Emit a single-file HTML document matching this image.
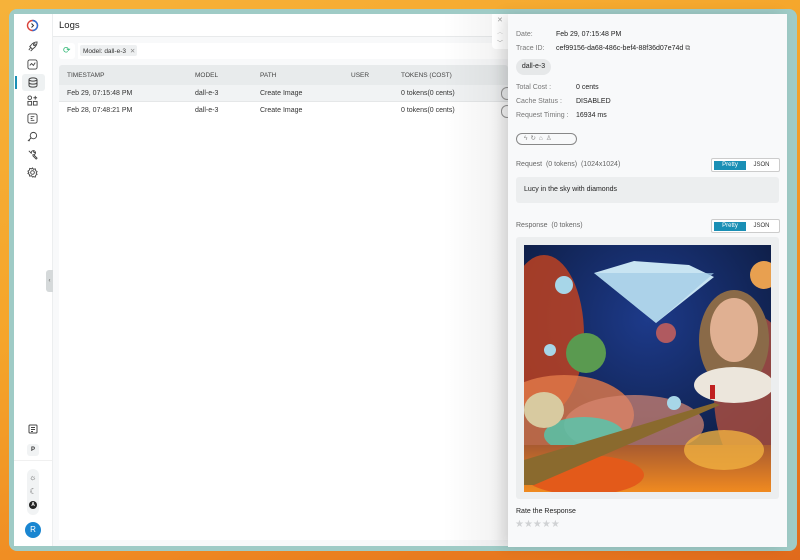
<!DOCTYPE html>
<html><head><meta charset="utf-8"><style>
*{box-sizing:border-box;margin:0;padding:0}
body{width:800px;height:560px;overflow:hidden;font-family:"Liberation Sans",sans-serif;background:linear-gradient(160deg,#f6b23a 0%,#f5a52a 40%,#ef8a22 70%,#e06a1c 100%);position:relative}
.win{position:absolute;left:9px;top:9px;width:788px;height:542px;background:#9fcbc6;border-radius:8px}
.side{position:absolute;left:14px;top:14px;width:39px;height:532px;background:#fff;border-right:1px solid #eceeef}
.main{position:absolute;left:53px;top:14px;width:455px;height:532px;background:#f8f9fa}
.t{position:absolute;font-size:7px;color:#333;white-space:nowrap}
.drawer{position:absolute;left:508px;top:14px;width:279px;height:533px;background:#f8f9fa;box-shadow:-6px 0 12px rgba(0,0,0,.12)}
.lab{position:absolute;font-size:7px;color:#777;white-space:nowrap}
.val{position:absolute;font-size:7px;color:#222;white-space:nowrap}
.seg{position:absolute;width:69px;height:14px;border:1px solid #ccc;border-radius:2px;background:#fff;display:flex;align-items:center;padding:0 2px}
.seg b{display:flex;align-items:center;justify-content:center;width:32px;height:9px;background:#1a8fb5;color:#fff;font-size:6px;font-weight:normal}
.seg i{display:flex;align-items:center;justify-content:center;width:31px;height:9px;font-style:normal;font-size:6px;color:#333}
</style></head><body>
<div class="win"></div>
<div class="side">
 <svg style="position:absolute;left:12px;top:5px" width="13" height="13" viewBox="0 0 13 13"><circle cx="6.5" cy="6.5" r="5" fill="none" stroke="#d9423a" stroke-width="1.4"/><path d="M6.5 1.5A5 5 0 0 1 6.5 11.5" fill="none" stroke="#2a6fd6" stroke-width="1.4"/><path d="M5.5 4.5l2 2-2 2" fill="none" stroke="#333" stroke-width="1"/></svg>
 <svg style="position:absolute;left:13px;top:27px" width="11" height="11" viewBox="0 0 12 12" fill="none" stroke="#444" stroke-width="1"><path d="M2 10l2-3M4 11l2-2M7 8c3-2 4-5 4-7-2 0-5 1-7 4L3 6l3 3z"/><circle cx="8" cy="4" r="1"/></svg>
 <svg style="position:absolute;left:13px;top:45px" width="11" height="11" viewBox="0 0 12 12" fill="none" stroke="#444" stroke-width="1"><rect x="1" y="1" width="10" height="10" rx="2"/><path d="M3 7l2-2 2 2 2-3"/></svg>
 <div style="position:absolute;left:1px;top:62px;width:2px;height:13px;background:#1a8fb5"></div>
 <div style="position:absolute;left:8px;top:60px;width:23px;height:17px;background:#eef1f2;border-radius:3px"></div>
 <svg style="position:absolute;left:14px;top:63px" width="10" height="11" viewBox="0 0 10 11" fill="none" stroke="#444" stroke-width="1"><ellipse cx="5" cy="2.5" rx="4" ry="1.6"/><path d="M1 2.5v6c0 1 2 1.6 4 1.6s4-.6 4-1.6v-6M1 5.5c0 1 2 1.6 4 1.6s4-.6 4-1.6"/></svg>
 <svg style="position:absolute;left:13px;top:81px" width="11" height="11" viewBox="0 0 12 12" fill="none" stroke="#444" stroke-width="1"><circle cx="3" cy="3" r="2"/><rect x="1" y="7" width="4" height="4"/><rect x="7" y="7" width="4" height="4"/><path d="M9 1v4M7 3h4"/></svg>
 <svg style="position:absolute;left:13px;top:99px" width="11" height="11" viewBox="0 0 12 12" fill="none" stroke="#444" stroke-width="1"><rect x="1" y="1" width="10" height="10" rx="2"/><path d="M4 4h4M4 6h2M4 8h4"/></svg>
 <svg style="position:absolute;left:13px;top:117px" width="11" height="11" viewBox="0 0 12 12" fill="none" stroke="#444" stroke-width="1"><circle cx="7" cy="5" r="3.5"/><path d="M4.5 7.5L1 11M2 10l1 1"/></svg>
 <svg style="position:absolute;left:13px;top:135px" width="11" height="11" viewBox="0 0 12 12" fill="none" stroke="#444" stroke-width="1"><path d="M2 2l3 3M7 6l4 4-1 1-4-4M5 5c-1-2 1-4 3-3L7 3l1 1 1-1c1 2-1 4-3 3"/></svg>
 <svg style="position:absolute;left:13px;top:153px" width="11" height="11" viewBox="0 0 12 12" fill="none" stroke="#444" stroke-width="1"><circle cx="6" cy="6" r="2"/><path d="M6 1l1 1.5 2-.5.5 2L11 5l-1 1.5 1 1.5-1.5 1-.5 2-2-.5L6 11l-1-1.5-2 .5-.5-2L1 7l1-1-1-1.5 1.5-1 .5-2 2 .5z"/></svg>
 <svg style="position:absolute;left:14px;top:410px" width="10" height="10" viewBox="0 0 10 10" fill="none" stroke="#444" stroke-width="1"><rect x="1" y="1" width="8" height="8" rx="1"/><path d="M3 3.5h4M3 5.5h4M3 7.5h2"/></svg>
 <div style="position:absolute;left:13px;top:430px;width:12px;height:12px;background:#f1f3f4;border-radius:3px;font-size:6px;font-weight:bold;text-align:center;line-height:12px;color:#333">P</div>
 <div style="position:absolute;left:0;top:446px;width:38px;height:1px;background:#f0f0f0"></div>
 <div style="position:absolute;left:13px;top:455px;width:12px;height:46px;background:#f1f3f4;border-radius:6px"></div>
 <div style="position:absolute;left:15px;top:459px;font-size:8px;color:#555">☼</div>
 <div style="position:absolute;left:15.5px;top:473px;font-size:8px;color:#555">☾</div>
 <div style="position:absolute;left:15px;top:487px;width:8px;height:8px;border-radius:50%;background:#222;color:#fff;font-size:5px;text-align:center;line-height:8px;font-weight:bold">A</div>
 <div style="position:absolute;left:11px;top:508px;width:16px;height:16px;border-radius:50%;background:#1a86d1;color:#fff;font-size:8px;text-align:center;line-height:16px">R</div>
</div>
<div class="main">
 <div style="position:absolute;left:0;top:0;width:455px;height:23px;background:#fff;border-bottom:1px solid #e8eaeb"></div>
 <div class="t" style="left:6px;top:6px;font-size:9.5px;color:#222">Logs</div>
 <div style="position:absolute;left:6px;top:29px;width:16px;height:16px;background:#fff;border-radius:3px"></div>
 <div class="t" style="left:10px;top:31px;color:#2bb673;font-size:9px">⟳</div>
 <div style="position:absolute;left:25px;top:29px;width:430px;height:16px;background:#fff"></div>
 <div style="position:absolute;left:27px;top:31px;width:57px;height:11px;background:#eef0f1;border-radius:2px"></div>
 <div class="t" style="left:30px;top:32.5px;font-size:6.5px">Model: dall-e-3 <span style="color:#888;margin-left:2px">✕</span></div>
 <div style="position:absolute;left:6px;top:51px;width:449px;height:20px;background:#e8ebec;border-radius:3px 3px 0 0"></div>
 <div class="t" style="left:14px;top:58px;font-size:6.5px;color:#444">TIMESTAMP</div>
 <div class="t" style="left:142px;top:58px;font-size:6.5px;color:#444">MODEL</div>
 <div class="t" style="left:207px;top:58px;font-size:6.5px;color:#444">PATH</div>
 <div class="t" style="left:298px;top:58px;font-size:6.5px;color:#444">USER</div>
 <div class="t" style="left:348px;top:58px;font-size:6.5px;color:#444">TOKENS (COST)</div>
 <div style="position:absolute;left:6px;top:71px;width:449px;height:17px;background:#f1f3f4;border-bottom:1px solid #e5e7e8"></div>
 <div style="position:absolute;left:6px;top:88px;width:449px;height:438px;background:#fff"></div>
 <div class="t" style="left:14px;top:76px">Feb 29, 07:15:48 PM</div>
 <div class="t" style="left:142px;top:76px">dall-e-3</div>
 <div class="t" style="left:207px;top:76px">Create Image</div>
 <div class="t" style="left:348px;top:76px">0 tokens(0 cents)</div>
 <div class="t" style="left:14px;top:93px">Feb 28, 07:48:21 PM</div>
 <div class="t" style="left:142px;top:93px">dall-e-3</div>
 <div class="t" style="left:207px;top:93px">Create Image</div>
 <div class="t" style="left:348px;top:93px">0 tokens(0 cents)</div>
 <div style="position:absolute;left:448px;top:73px;width:12px;height:13px;border:1px solid #999;border-radius:6px"></div>
 <div style="position:absolute;left:448px;top:91px;width:12px;height:13px;border:1px solid #999;border-radius:6px"></div>
 <div style="position:absolute;left:390px;top:0;width:65px;height:532px;background:linear-gradient(90deg,rgba(0,0,0,0),rgba(0,0,0,.06))"></div>
</div>
<div style="position:absolute;left:46px;top:270px;width:7px;height:22px;background:#d5d9da;border-radius:3px 0 0 3px;font-size:6px;color:#666;line-height:22px;text-align:center">‹</div>
<div style="position:absolute;left:492px;top:14px;width:16px;height:35px;background:#fff;border-radius:0 0 0 4px"></div>
<div class="t" style="left:497px;top:16px;color:#999;font-size:7px">✕</div>
<div class="t" style="left:497px;top:27px;color:#ccc;font-size:6px">︿</div>
<div class="t" style="left:497px;top:38px;color:#999;font-size:6px">﹀</div>
<div class="drawer">
 <div class="lab" style="left:8px;top:17px">Date:</div><div class="val" style="left:48px;top:17px">Feb 29, 07:15:48 PM</div>
 <div class="lab" style="left:8px;top:31px">Trace ID:</div><div class="val" style="left:48px;top:31px">cef99156-da68-486c-bef4-88f36d07e74d <span style="color:#666">⧉</span></div>
 <div style="position:absolute;left:8px;top:45px;width:35px;height:16px;background:#e6e8e9;border-radius:8px;font-size:7px;color:#222;text-align:center;line-height:16px">dall-e-3</div>
 <div class="lab" style="left:8px;top:70px">Total Cost :</div><div class="val" style="left:68px;top:70px">0 cents</div>
 <div class="lab" style="left:8px;top:84px">Cache Status :</div><div class="val" style="left:68px;top:84px">DISABLED</div>
 <div class="lab" style="left:8px;top:98px">Request Timing :</div><div class="val" style="left:68px;top:98px">16934 ms</div>
 <div style="position:absolute;left:8px;top:119px;width:61px;height:12px;border:1px solid #888;border-radius:6px;font-size:6.5px;color:#888;line-height:10px;padding-left:7px;letter-spacing:3px">ϟ↻⌂♙</div>
 <div class="lab" style="left:8px;top:147px;color:#666">Request &nbsp;(0 tokens) &nbsp;(1024x1024)</div>
 <div class="seg" style="left:203px;top:144px"><b>Pretty</b><i>JSON</i></div>
 <div style="position:absolute;left:8px;top:163px;width:263px;height:26px;background:#eceeef;border-radius:3px"></div>
 <div class="val" style="left:16px;top:172px">Lucy in the sky with diamonds</div>
 <div class="lab" style="left:8px;top:208px;color:#666">Response &nbsp;(0 tokens)</div>
 <div class="seg" style="left:203px;top:205px"><b>Pretty</b><i>JSON</i></div>
 <div style="position:absolute;left:8px;top:223px;width:263px;height:262px;background:#eceeef;border-radius:3px"></div>
 <svg style="position:absolute;left:16px;top:231px" width="247" height="247" viewBox="0 0 247 247">
  <defs>
   <radialGradient id="sp" cx="50%" cy="30%" r="70%"><stop offset="0" stop-color="#1d3a8a"/><stop offset="1" stop-color="#0c1a3c"/></radialGradient>
   <linearGradient id="bt" x1="0" y1="0" x2="0" y2="1"><stop offset="0" stop-color="#a85a30"/><stop offset="1" stop-color="#f08a20"/></linearGradient>
  </defs>
  <rect width="247" height="247" fill="url(#sp)"/>
  <ellipse cx="20" cy="90" rx="40" ry="80" fill="#c8441e" opacity=".8"/>
  <ellipse cx="40" cy="170" rx="70" ry="40" fill="#e27b4a" opacity=".8"/>
  <ellipse cx="110" cy="180" rx="70" ry="30" fill="#d88870" opacity=".7"/>
  <ellipse cx="230" cy="150" rx="40" ry="80" fill="#b05040" opacity=".8"/>
  <ellipse cx="60" cy="190" rx="40" ry="18" fill="#4fc9b0" opacity=".8"/>
  <rect x="0" y="200" width="247" height="47" fill="url(#bt)"/>
  <ellipse cx="60" cy="230" rx="60" ry="20" fill="#e35a1a"/>
  <ellipse cx="200" cy="205" rx="40" ry="20" fill="#f0b040" opacity=".8"/>
  <path d="M0 215L190 158 196 160 10 240 0 240z" fill="#8a6a2e"/>
  <circle cx="62" cy="108" r="20" fill="#5a9a50"/>
  <circle cx="142" cy="88" r="10" fill="#b05a60"/>
  <circle cx="240" cy="30" r="14" fill="#e8a050"/>
  <path d="M70 28L110 16 165 20 190 32 132 78z" fill="#c8e4f2"/>
  <path d="M70 28h120L132 78z" fill="#9fcbe6" opacity=".7"/>
  <ellipse cx="210" cy="95" rx="35" ry="50" fill="#8a6a48"/>
  <ellipse cx="210" cy="85" rx="24" ry="32" fill="#e0b092"/>
  <ellipse cx="210" cy="140" rx="40" ry="18" fill="#ece6dc"/>
  <circle cx="40" cy="40" r="9" fill="#a7d6e8"/>
  <circle cx="26" cy="105" r="6" fill="#a7d6e8"/>
  <circle cx="150" cy="158" r="7" fill="#a7d6e8"/>
  <ellipse cx="20" cy="165" rx="20" ry="18" fill="#d8caa0"/>
  <rect x="186" y="140" width="5" height="14" fill="#c02020"/>
 </svg>
 <div class="val" style="left:8px;top:494px">Rate the Response</div>
 <div class="val" style="left:7px;top:505px;font-size:10px;color:#d0d2d4;letter-spacing:0">★★★★★</div>
</div>
</body></html>
